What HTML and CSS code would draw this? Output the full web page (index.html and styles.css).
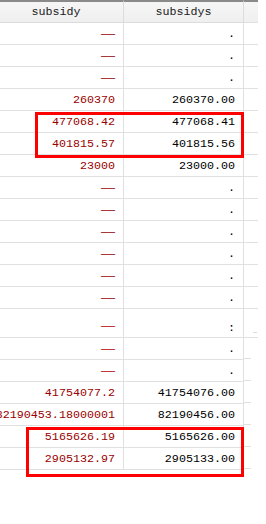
FILE: index.html
```html
<!DOCTYPE html>
<html>
<head>
<meta charset="utf-8">
<link rel="stylesheet" href="styles.css">
</head>
<body>
<div class="view">
  <div class="grid">
    <div class="hd">subsidy</div><div class="hd hd2">subsidys</div><div class="hd fill"></div>

    <div class="c l"><span class="nul">——</span></div><div class="c r">.</div><div class="c fill"></div>
    <div class="c l"><span class="nul">——</span></div><div class="c r">.</div><div class="c fill"></div>
    <div class="c l"><span class="nul">——</span></div><div class="c r">.</div><div class="c fill"></div>
    <div class="c l">260370</div><div class="c r">260370.00</div><div class="c fill"></div>
    <div class="c l">477068.42</div><div class="c r">477068.41</div><div class="c fill"></div>
    <div class="c l">401815.57</div><div class="c r">401815.56</div><div class="c fill"></div>
    <div class="c l">23000</div><div class="c r">23000.00</div><div class="c fill"></div>
    <div class="c l"><span class="nul">——</span></div><div class="c r">.</div><div class="c fill"></div>
    <div class="c l"><span class="nul">——</span></div><div class="c r">.</div><div class="c fill"></div>
    <div class="c l"><span class="nul">——</span></div><div class="c r">.</div><div class="c fill"></div>
    <div class="c l"><span class="nul">——</span></div><div class="c r">.</div><div class="c fill"></div>
    <div class="c l"><span class="nul">——</span></div><div class="c r">.</div><div class="c fill"></div>
    <div class="c l"><span class="nul">——</span></div><div class="c r">.</div><div class="c fill"></div>
    <div class="c l tall"><span class="nul red">——</span></div><div class="c r tall tallr">:</div><div class="c fill tall"></div>
    <div class="c l"><span class="nul red">——</span></div><div class="c r">.</div><div class="c fill short"></div>
    <div class="c l"><span class="nul red">——</span></div><div class="c r">.</div><div class="c fill short"></div>
    <div class="c l">41754077.2</div><div class="c r">41754076.00</div><div class="c fill short"></div>
    <div class="c l">82190453.18000001</div><div class="c r">82190456.00</div><div class="c fill short"></div>
    <div class="c l">5165626.19</div><div class="c r">5165626.00</div><div class="c fill short"></div>
    <div class="c l">2905132.97</div><div class="c r">2905133.00</div><div class="c fill short"></div>
  </div>
  <div class="tick"></div>
  <div class="mark mark1"></div>
  <div class="mark mark2"></div>
</div>
</body>
</html>
```

FILE: styles.css
```css
html, body {
  margin: 0;
  padding: 0;
  background: #ffffff;
}

.view {
  position: relative;
  width: 266px;
  height: 524px;
  overflow: hidden;
  font-family: "Liberation Mono", "DejaVu Sans Mono", monospace;
  font-size: 11.7px;
}

.grid {
  display: grid;
  grid-template-columns: 135px 120px 14px;
  margin-left: -11px;
  width: 269px;
}

.hd {
  height: 20px;
  line-height: 20px;
  border-top: 2px solid #8a8a8a;
  border-bottom: 1px solid #dcdcdc;
  border-right: 1px solid #dcdcdc;
  background: linear-gradient(#f6f6f6, #efefef);
  text-align: center;
  color: #1a1a1a;
  box-sizing: content-box;
  white-space: nowrap;
}

.hd.fill {
  border-right: none;
  background: linear-gradient(#f6f6f6, #efefef);
}

.c {
  height: 21px;
  line-height: 22px;
  border-bottom: 1px solid #e0e0e0;
  white-space: nowrap;
  overflow: hidden;
}

.l {
  border-right: 1px solid #e0e0e0;
  text-align: right;
  padding-right: 8px;
  color: #9a0000;
  direction: rtl;
}

.r {
  border-right: 1px solid #e0e0e0;
  text-align: right;
  padding-right: 8px;
  color: #000000;
}

.fill {
  border-bottom: 1px solid #e0e0e0;
}

.fill.short {
  border-bottom: none;
  background: linear-gradient(to right, #e0e0e0 7px, transparent 7px) no-repeat left bottom / 100% 1px;
}

.tall {
  height: 28px;
  line-height: 34px;
}

.tallr {
  line-height: 38px;
}

.nul {
  color: #8f0000;
  letter-spacing: 0;
}

.nul.red {
  color: #b00000;
}

.tick {
  position: absolute;
  left: 253px;
  top: 332px;
  width: 4px;
  height: 1px;
  background: #dcdcdc;
}

.mark {
  position: absolute;
  border: 3px solid #ff0000;
  box-sizing: border-box;
}

.mark1 {
  left: 35px;
  top: 112px;
  width: 209px;
  height: 46px;
}

.mark2 {
  left: 26px;
  top: 427px;
  width: 218px;
  height: 50px;
}
```
